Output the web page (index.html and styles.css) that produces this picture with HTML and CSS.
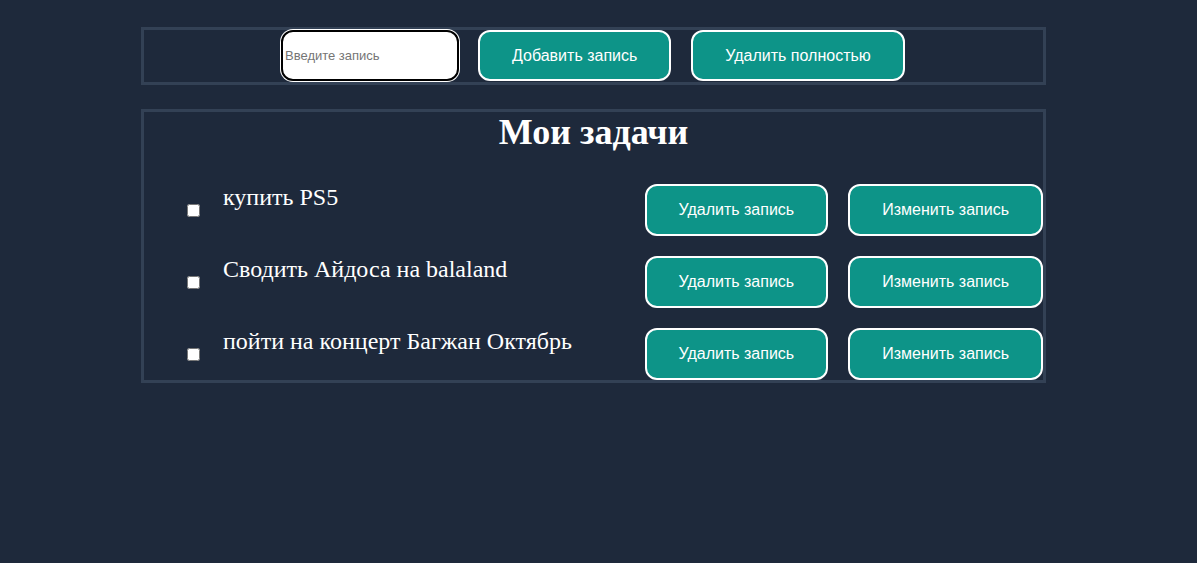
FILE: index.html
```html
<!DOCTYPE html>
<html lang="ru">
<head>
<meta charset="utf-8">
<title>Мои задачи</title>
<link rel="stylesheet" href="styles.css">
</head>
<body>
<div class="page">
  <div class="panel toolbar">
    <input class="entry" type="text" placeholder="Введите запись">
    <button class="btn btn-top">Добавить запись</button>
    <button class="btn btn-top">Удалить полностью</button>
  </div>
  <div class="panel tasks">
    <h1 class="title">Мои задачи</h1>
    <ul class="list">
      <li class="row">
        <input class="check" type="checkbox">
        <span class="task">купить PS5</span>
        <div class="actions">
          <button class="btn btn-row">Удалить запись</button>
          <button class="btn btn-row">Изменить запись</button>
        </div>
      </li>
      <li class="row">
        <input class="check" type="checkbox">
        <span class="task">Сводить Айдоса на balaland</span>
        <div class="actions">
          <button class="btn btn-row">Удалить запись</button>
          <button class="btn btn-row">Изменить запись</button>
        </div>
      </li>
      <li class="row">
        <input class="check" type="checkbox">
        <span class="task">пойти на концерт Багжан Октябрь</span>
        <div class="actions">
          <button class="btn btn-row">Удалить запись</button>
          <button class="btn btn-row">Изменить запись</button>
        </div>
      </li>
    </ul>
  </div>
</div>
</body>
</html>
```
FILE: styles.css
```css
html, body {
  margin: 0;
  padding: 0;
  background: #1e293b;
}
body {
  font-family: "Liberation Serif", "Times New Roman", serif;
  color: #ffffff;
}
.page {
  padding: 27px 0 0 141px;
  display: flex;
  flex-direction: column;
  gap: 24px;
}
.panel {
  width: 905px;
  box-sizing: border-box;
  border: 3px solid #334155;
}
.toolbar {
  height: 58px;
  display: flex;
  align-items: flex-start;
  gap: 20px;
  padding-left: 137px;
}
.entry {
  width: 178px;
  height: 51px;
  box-sizing: border-box;
  margin: 0 -1px 0 0;
  border: 2px solid #000000;
  border-radius: 12px;
  box-shadow: 0 0 0 1px #ffffff;
  padding: 1px 2px;
  font-family: "Liberation Sans", Arial, sans-serif;
  font-size: 13px;
  background: #ffffff;
  outline: none;
}
.entry::placeholder {
  color: #757575;
}
.btn {
  margin: 0;
  background: #0d9488;
  color: #ffffff;
  border: 2px solid #ffffff;
  border-radius: 12px;
  font-family: "Liberation Sans", Arial, sans-serif;
  font-size: 16px;
  padding: 0 32px;
  cursor: pointer;
}
.btn-top {
  height: 51px;
}
.btn-row {
  height: 52px;
}
.tasks {
  height: 274px;
}
.title {
  margin: 0;
  font-size: 36px;
  font-weight: bold;
  text-align: center;
  line-height: 41px;
}
.list {
  list-style: none;
  margin: 31px 0 0;
  padding: 0;
  display: flex;
  flex-direction: column;
  gap: 20px;
}
.row {
  display: flex;
  align-items: center;
  padding-left: 43px;
}
.check {
  width: 13px;
  height: 13px;
  margin: 0;
}
.task {
  align-self: flex-start;
  margin-left: 23px;
  font-size: 24px;
  line-height: 27px;
}
.actions {
  margin-left: auto;
  display: flex;
  gap: 20px;
}
```
